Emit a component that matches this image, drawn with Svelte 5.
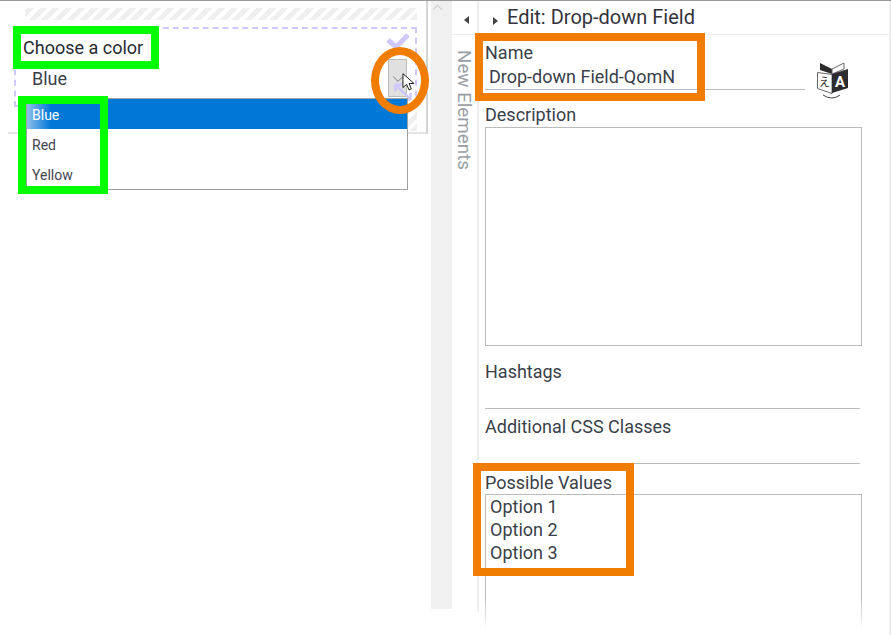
<script lang="ts">
  const options = ['Blue', 'Red', 'Yellow'];
  const values = ['Option 1', 'Option 2', 'Option 3'];
</script>

<div class="page">
  <section class="canvas">
    <div class="hatch"></div>
    <div class="field">
      <div class="field-label">Choose a color</div>
      <div class="field-value">Blue</div>
      <svg class="check" viewBox="0 0 26 20"><path d="M3 8l8 7L23 3" fill="none" stroke="#d0c8fb" stroke-width="5" /></svg>
      <div class="select-btn">
        <svg viewBox="0 0 20 12" class="chev"><path d="M4 3l6 6 6-6" fill="none" stroke="#666" stroke-width="1" /></svg>
      </div>
      <svg class="move" viewBox="0 0 24 24"><path d="M3 3l18 18M3 3v8M3 3h8M21 21v-8M21 21h-8" fill="none" stroke="#cfc8fb" stroke-width="3" /></svg>
    </div>
    <div class="hatch-bottom"></div>
    <ul class="list">
      {#each options as opt, i}
        <li class:active={i === 0}>{opt}</li>
      {/each}
    </ul>
    <svg class="cursor" viewBox="0 0 14 20"><path d="M1 1v15l4-3.5 2.5 6 2.6-1.1-2.5-5.8H13z" fill="#fff" stroke="#111" stroke-width="1" /></svg>
    <div class="mark green-title"></div>
    <div class="mark green-list"></div>
    <div class="mark ring"></div>
  </section>

  <div class="scroll"><span class="scroll-up"></span></div>

  <aside class="rail">
    <div class="rail-head"><span class="tri-left"></span></div>
    <div class="rail-label">New Elements</div>
  </aside>

  <main class="panel">
    <header class="panel-head"><span class="tri-right"></span>Edit: Drop-down Field</header>
    <div class="form">
      <div class="label">Name</div>
      <div class="name-row">
        <div class="input name-input">Drop-down Field-QomN</div>
        <svg class="lang" viewBox="0 0 32 40">
          <path d="M0.500 10.500l14.500 2v19l-14.500-5z" fill="#fff" stroke="#666" stroke-width="1" />
          <path d="M3 1l12 6v5L3 8z" fill="#2b2b2b" />
          <path d="M27 1L15 7v5l12-5z" fill="#fff" stroke="#666" stroke-width="1" />
          <path d="M15 12l16-5v19l-16 5z" fill="#2c2c2e" />
          <text x="23" y="25" class="lang-a">A</text>
          <text x="7.500" y="24" class="lang-k">え</text>
          <path d="M6 33q9 6 17 0" fill="none" stroke="#444" stroke-width="1" />
        </svg>
      </div>
      <div class="label desc-label">Description</div>
      <div class="box desc"></div>
      <div class="label hash-label">Hashtags</div>
      <div class="input blank"></div>
      <div class="label css-label">Additional CSS Classes</div>
      <div class="input blank css"></div>
      <div class="label values-label">Possible Values</div>
      <div class="box values">
        {#each values as v}
          <div>{v}</div>
        {/each}
      </div>
    </div>
    <div class="fade"></div>
    <div class="mark orange-name"></div>
    <div class="mark orange-values"></div>
  </main>
</div>

<style>
  :global(body) {
    margin: 0;
    background: #fff;
  }

  .page {
    display: grid;
    grid-template-columns: 431px 21px 27px 412px;
    width: 891px;
    height: 635px;
    overflow: hidden;
    position: relative;
    font-family: Roboto, sans-serif;
    color: #3a3f4a;
    border-top: 1px solid #999;
    box-sizing: border-box;
  }

  /* left canvas */
  .canvas {
    position: relative;
    height: 133px;
    box-sizing: border-box;
    width: 428px;
    padding: 7px 9px 0 14px;
    border-right: 2px solid #d4d4d4;
  }

  .canvas::before {
    content: '';
    position: absolute;
    left: 8px;
    right: 0;
    bottom: 0;
    height: 2px;
    background: #e4e4e4;
  }

  .hatch {
    height: 12px;
    margin-left: 11px;
    background: repeating-linear-gradient(-45deg, #efefef 0 5px, #fff 5px 9px);
  }

  .field {
    position: relative;
    height: 80px;
    margin-top: 7px;
    box-sizing: border-box;
    border: 2px dashed #d0c8fb;
    padding: 7px 0 0 7px;
    background: #fff;
  }

  .field-label {
    font-size: 18px;
    line-height: 24px;
    color: #2a2a33;
  }

  .field-value {
    font-size: 18px;
    line-height: 24px;
    margin: 7px 0 0 9px;
  }

  .check {
    position: absolute;
    right: 4px;
    top: 3px;
    width: 26px;
    height: 20px;
  }

  .select-btn {
    position: absolute;
    left: 372px;
    top: 30px;
    width: 19px;
    height: 38px;
    background: #e0e0e0;
    border: 1px solid #bbb;
    box-sizing: border-box;
    display: flex;
    align-items: center;
    justify-content: center;
  }

  .chev {
    width: 16px;
    height: 10px;
    margin-top: 2px;
  }

  .move {
    position: absolute;
    left: 377px;
    top: 53px;
    width: 20px;
    height: 20px;
  }

  .hatch-bottom {
    height: 24px;
    margin-left: 11px;
    background: repeating-linear-gradient(-45deg, #efefef 0 5px, #fff 5px 9px);
  }

  .list {
    position: absolute;
    left: 26px;
    top: 97px;
    width: 382px;
    height: 92px;
    margin: 0;
    padding: 0;
    box-sizing: border-box;
    list-style: none;
    background: #fff;
    border: 1px solid #a0a0a0;
    font-size: 14px;
  }

  .list li {
    height: 30px;
    line-height: 33px;
    padding-left: 5px;
    color: #44464e;
  }

  .list li.active {
    color: #fff;
    background: linear-gradient(90deg, #8dbdea 0, #0078d7 24px);
  }

  .cursor {
    position: absolute;
    left: 402px;
    top: 71px;
    width: 13px;
    height: 20px;
  }

  .mark {
    position: absolute;
    box-sizing: border-box;
    pointer-events: none;
  }

  .green-title {
    left: 13px;
    top: 25px;
    width: 146px;
    height: 43px;
    border: 8px solid #00ff00;
  }

  .green-list {
    left: 18px;
    top: 95px;
    width: 90px;
    height: 98px;
    border: 8px solid #00ff00;
  }

  .ring {
    left: 371px;
    top: 46px;
    width: 58px;
    height: 67px;
    border: 8px solid #f07c00;
    border-radius: 50%;
  }

  /* scrollbar */
  .scroll {
    height: 608px;
    background: #f0f0f0;
    position: relative;
  }

  .scroll-up {
    position: absolute;
    left: 3px;
    top: 5px;
    width: 6px;
    height: 6px;
    border-top: 1px solid #ccc;
    border-right: 1px solid #ccc;
    transform: rotate(-45deg);
  }

  /* vertical rail */
  .rail {
    height: 611px;
    box-sizing: border-box;
    border-right: 2px solid #eee;
  }

  .rail-head {
    height: 33px;
    border-bottom: 1px solid #eee;
    display: flex;
    align-items: center;
    justify-content: center;
    margin-right: -2px;
  }

  .tri-left {
    width: 0;
    height: 0;
    margin-top: 4px;
    margin-left: 1px;
    border: 4px solid transparent;
    border-left: 0;
    border-right: 5px solid #444;
  }

  .rail-label {
    writing-mode: vertical-rl;
    font-size: 18.800px;
    line-height: 24px;
    color: #9a9ea6;
    margin: 15px 0 0 0;
    width: 24px;
  }

  /* edit panel */
  .panel {
    position: relative;
    height: 634px;
    border-right: 2px solid #eee;
    box-sizing: border-box;
  }

  .panel-head {
    height: 34px;
    box-sizing: border-box;
    border-bottom: 1px solid #eee;
    font-size: 20px;
    line-height: 33px;
    padding-left: 28px;
    color: #33333b;
    position: relative;
  }

  .tri-right {
    position: absolute;
    left: 14px;
    top: 16px;
    width: 0;
    height: 0;
    border: 4px solid transparent;
    border-right: 0;
    border-left: 5px solid #444;
  }

  .form {
    padding: 7px 0 0 6px;
  }

  .label {
    font-size: 18px;
    line-height: 22px;
  }

  .name-row {
    position: relative;
    width: 320px;
  }

  .input {
    font-size: 18px;
    line-height: 24px;
    padding-left: 4px;
    border-bottom: 1px solid #bbb;
    box-sizing: border-box;
  }

  .name-input {
    height: 26px;
    padding-top: 1px;
  }

  .lang {
    position: absolute;
    left: 332px;
    top: -2px;
    width: 32px;
    height: 40px;
  }

  .lang-a {
    font: 700 15px Roboto, sans-serif;
    fill: #fff;
    text-anchor: middle;
  }

  .lang-k {
    font: 400 11px "Noto Sans CJK JP", sans-serif;
    fill: #333;
    text-anchor: middle;
  }

  .desc-label {
    margin-top: 14px;
  }

  .box {
    width: 377px;
    box-sizing: border-box;
    border: 1px solid #bbb;
    margin-top: 1px;
  }

  .desc {
    height: 219px;
  }

  .hash-label {
    margin-top: 15px;
  }

  .blank {
    width: 375px;
    height: 26px;
  }

  .css-label {
    margin-top: 7px;
  }

  .values-label {
    margin-top: 8px;
  }

  .values {
    height: 140px;
    margin-top: 0;
    padding: 0 4px;
    font-size: 18px;
    line-height: 23px;
  }

  .fade {
    position: absolute;
    left: 0;
    right: 0;
    top: 596px;
    bottom: 0;
    background: linear-gradient(rgba(255, 255, 255, 0), #fff 32px);
  }

  .orange-name {
    left: -4px;
    top: 32px;
    width: 230px;
    height: 68px;
    border: 8px solid #f07c00;
  }

  .orange-values {
    left: -6px;
    top: 462px;
    width: 161px;
    height: 113px;
    border: 8px solid #f07c00;
  }
</style>
